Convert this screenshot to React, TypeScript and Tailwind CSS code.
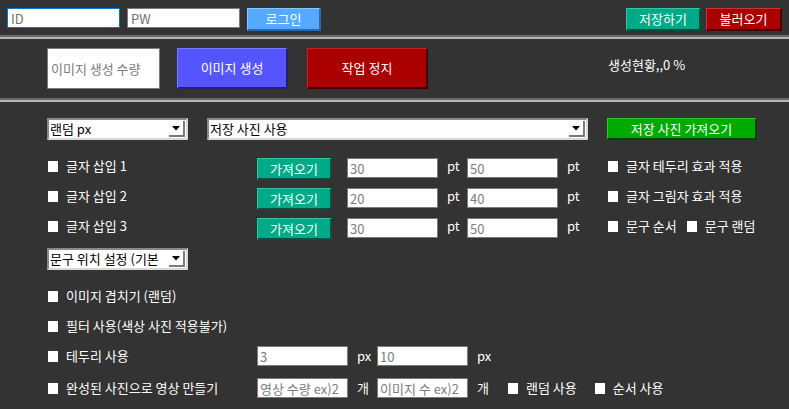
import React from "react";

function Box() {
  return <span className="w-[10px] h-[11px] bg-white shrink-0" />;
}

function Check({ label, cls = "" }: { label: string; cls?: string }) {
  return (
    <div className={`flex items-center h-[16px] gap-[8px] shrink-0 ${cls}`}>
      <Box />
      <span className="text-white text-[13px] leading-[16px] whitespace-nowrap">{label}</span>
    </div>
  );
}

function Field({ value, w = "w-[91px]", placeholder }: { value?: string; w?: string; placeholder?: string }) {
  return (
    <input
      defaultValue={value}
      placeholder={placeholder}
      className={`${w} h-[20px] shrink-0 border border-[#7a7a7a] bg-white text-[#7c7c7c] placeholder:text-[#7c7c7c] text-[13px] px-[2px] outline-none`}
    />
  );
}

function Btn({ text, cls }: { text: string; cls: string }) {
  return (
    <button className={`shrink-0 flex items-center justify-center text-white text-[13px] border-t border-l border-b-2 border-r-2 ${cls}`}>
      {text}
    </button>
  );
}

function Select({ text, w }: { text: string; w: string }) {
  return (
    <div className={`${w} h-[22px] shrink-0 bg-white border-2 border-t-[#8a8a8a] border-l-[#8a8a8a] border-r-[#d8d8d8] border-b-[#d8d8d8] flex items-center pl-[1px]`}>
      <span className="flex-1 min-w-0 whitespace-nowrap text-black text-[13px] leading-[18px]">{text}</span>
      <span className="w-[16px] h-[16px] mr-[1px] bg-white border-r-2 border-b-2 border-[#7a7a7a] flex items-center justify-center shrink-0">
        <svg width="8" height="5" viewBox="0 0 8 5">
          <polygon points="0,0 8,0 4,4.5" fill="#000" />
        </svg>
      </span>
    </div>
  );
}

function Sep() {
  return (
    <div>
      <div className="h-[2px] bg-[#6a6a6a]" />
      <div className="h-[2px] bg-[#b4b4b4]" />
    </div>
  );
}

export default function App() {
  return (
    <div className="w-[789px] h-[409px] bg-[#333333] overflow-hidden font-['Noto_Sans_CJK_KR','Noto_Sans',sans-serif]">
      {/* top bar */}
      <div className="h-[35px] flex items-start pt-[8px] pl-[7px] pr-[7px]">
        <input
          placeholder="ID"
          className="w-[113px] h-[20px] border border-[#0078d7] bg-white text-[13px] px-[3px] placeholder:text-[#707070] outline-none"
        />
        <input
          placeholder="PW"
          className="ml-[7px] w-[113px] h-[20px] border border-[#7a7a7a] bg-white text-[13px] px-[3px] placeholder:text-[#707070] outline-none"
        />
        <Btn text="로그인" cls="ml-[7px] w-[74px] h-[23px] bg-[#55aaff] border-t-[#88c4ff] border-l-[#88c4ff] border-b-[#2a6aa8] border-r-[#2a6aa8]" />
        <div className="flex-1" />
        <Btn text="저장하기" cls="w-[75px] h-[23px] bg-[#00aa88] border-t-[#33c4a4] border-l-[#33c4a4] border-b-[#00503f] border-r-[#00503f]" />
        <Btn text="불러오기" cls="ml-[5px] w-[76px] h-[23px] bg-[#aa0000] border-t-[#c83333] border-l-[#c83333] border-b-[#440000] border-r-[#440000]" />
      </div>
      <Sep />
      {/* middle */}
      <div className="h-[59px] flex items-start pt-[9px] pl-[47px]">
        <input
          placeholder="이미지 생성 수량"
          className="w-[113px] h-[41px] border border-[#7a7a7a] bg-white text-[13px] px-[3px] placeholder:text-[#7c7c7c] outline-none"
        />
        <Btn text="이미지 생성" cls="ml-[17px] w-[111px] h-[41px] bg-[#5555ff] border-t-[#7a7aff] border-l-[#7a7aff] border-b-[#222266] border-r-[#222266]" />
        <Btn text="작업 정지" cls="ml-[19px] w-[121px] h-[41px] bg-[#aa0000] border-t-[#c02020] border-l-[#c02020] border-b-[#440000] border-r-[#440000]" />
        <span className="ml-[180px] mt-[9px] text-white text-[13px] leading-[16px] whitespace-nowrap">생성현황,,0 %</span>
      </div>
      <Sep />
      {/* main */}
      <div className="pl-[47px] pt-[16px] flex flex-col">
        <div className="flex items-start gap-[19px]">
          <Select text="랜덤 px" w="w-[141px]" />
          <Select text="저장 사진 사용" w="w-[381px]" />
          <Btn text="저장 사진 가져오기" cls="w-[150px] h-[22px] bg-[#00aa00] border-t-[#33c433] border-l-[#33c433] border-b-[#004400] border-r-[#004400]" />
        </div>

        {[
          { n: "1", a: "30", b: "50", right: <Check label="글자 테두리 효과 적용" /> },
          { n: "2", a: "20", b: "40", right: <Check label="글자 그림자 효과 적용" /> },
          {
            n: "3",
            a: "30",
            b: "50",
            right: (
              <div className="flex items-start">
                <Check label="문구 순서" />
                <Check label="문구 랜덤" cls="ml-[10px]" />
              </div>
            ),
          },
        ].map((r, i) => (
          <div key={r.n} className={`flex items-start h-[22px] ${i === 0 ? "mt-[18px]" : "mt-[8px]"}`}>
            <div className="w-[210px] shrink-0 pl-[1px]">
              <Check label={`글자 삽입 ${r.n}`} />
            </div>
            <Btn text="가져오기" cls="w-[75px] h-[22px] bg-[#00aa88] border-t-[#33c4a4] border-l-[#33c4a4] border-b-[#00503f] border-r-[#00503f]" />
            <div className="w-[15px] shrink-0" />
            <Field value={r.a} />
            <span className="w-[29px] shrink-0 pl-[9px] text-white text-[13px] leading-[16px]">pt</span>
            <Field value={r.b} />
            <span className="w-[50px] shrink-0 pl-[9px] text-white text-[13px] leading-[16px]">pt</span>
            {r.right}
          </div>
        ))}

        <div className="mt-[8px]">
          <Select text="문구 위치 설정 (기본" w="w-[141px]" />
        </div>

        <div className="mt-[16px] h-[20px] flex items-center pl-[1px]">
          <Check label="이미지 겹치기 (랜덤)" />
        </div>
        <div className="mt-[10px] h-[20px] flex items-center pl-[1px]">
          <Check label="필터 사용(색상 사진 적용불가)" />
        </div>
        <div className="mt-[10px] h-[20px] flex items-center">
          <div className="w-[210px] shrink-0 pl-[1px]">
            <Check label="테두리 사용" />
          </div>
          <Field value="3" />
          <span className="w-[29px] shrink-0 pl-[9px] text-white text-[13px] leading-[16px]">px</span>
          <Field value="10" />
          <span className="pl-[9px] text-white text-[13px] leading-[16px]">px</span>
        </div>
        <div className="mt-[12px] h-[20px] flex items-center">
          <div className="w-[210px] shrink-0 pl-[1px]">
            <Check label="완성된 사진으로 영상 만들기" />
          </div>
          <Field placeholder="영상 수량 ex)2" />
          <span className="w-[29px] shrink-0 pl-[9px] text-white text-[13px] leading-[16px]">개</span>
          <Field placeholder="이미지 수 ex)2" />
          <span className="w-[40px] shrink-0 pl-[9px] text-white text-[13px] leading-[16px]">개</span>
          <Check label="랜덤 사용" />
          <Check label="순서 사용" cls="ml-[18px]" />
        </div>
      </div>
    </div>
  );
}
